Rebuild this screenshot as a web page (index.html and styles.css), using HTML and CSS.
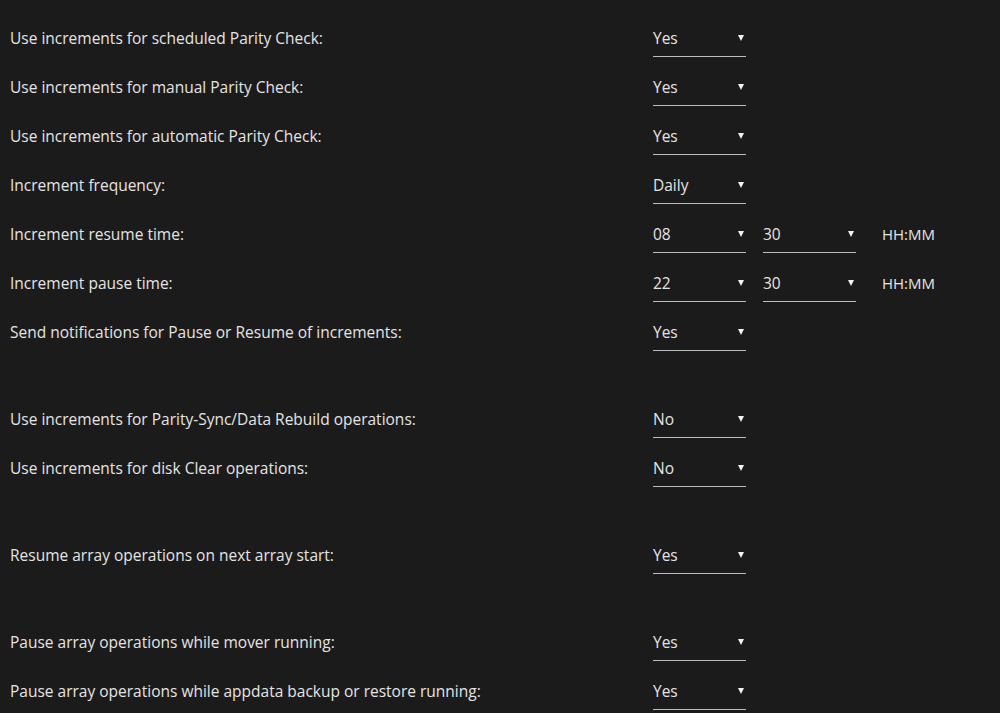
FILE: index.html
```html
<!DOCTYPE html>
<html>
<head>
<meta charset="utf-8">
<link rel="stylesheet" href="styles.css">
</head>
<body>
<div class="form">
  <div class="row"><div class="label">Use increments for scheduled Parity Check:</div><div class="sel"><span>Yes</span><i class="arrow"></i></div></div>
  <div class="row"><div class="label">Use increments for manual Parity Check:</div><div class="sel"><span>Yes</span><i class="arrow"></i></div></div>
  <div class="row"><div class="label">Use increments for automatic Parity Check:</div><div class="sel"><span>Yes</span><i class="arrow"></i></div></div>
  <div class="row"><div class="label">Increment frequency:</div><div class="sel"><span>Daily</span><i class="arrow"></i></div></div>
  <div class="row"><div class="label">Increment resume time:</div><div class="sel"><span>08</span><i class="arrow"></i></div><div class="sel sel2"><span>30</span><i class="arrow"></i></div><div class="unit">HH:MM</div></div>
  <div class="row"><div class="label">Increment pause time:</div><div class="sel"><span>22</span><i class="arrow"></i></div><div class="sel sel2"><span>30</span><i class="arrow"></i></div><div class="unit">HH:MM</div></div>
  <div class="row"><div class="label">Send notifications for Pause or Resume of increments:</div><div class="sel"><span>Yes</span><i class="arrow"></i></div></div>
  <div class="spacer"></div>
  <div class="row"><div class="label">Use increments for Parity-Sync/Data Rebuild operations:</div><div class="sel"><span>No</span><i class="arrow"></i></div></div>
  <div class="row"><div class="label">Use increments for disk Clear operations:</div><div class="sel"><span>No</span><i class="arrow"></i></div></div>
  <div class="spacer"></div>
  <div class="row"><div class="label">Resume array operations on next array start:</div><div class="sel"><span>Yes</span><i class="arrow"></i></div></div>
  <div class="spacer"></div>
  <div class="row"><div class="label">Pause array operations while mover running:</div><div class="sel"><span>Yes</span><i class="arrow"></i></div></div>
  <div class="row"><div class="label">Pause array operations while appdata backup or restore running:</div><div class="sel"><span>Yes</span><i class="arrow"></i></div></div>
</div>
</body>
</html>
```
FILE: styles.css
```css
html, body {
  margin: 0;
  padding: 0;
  background: #1c1b1b;
  height: 100%;
  overflow: hidden;
}
body {
  font-family: "Open Sans", "DejaVu Sans", sans-serif;
  font-size: 15.5px;
  font-weight: 500;
  color: #e4e4e4;
}
.form {
  padding: 14px 0 0 10px;
  display: flex;
  flex-direction: column;
}
.row {
  display: flex;
  align-items: flex-start;
  height: 49px;
}
.label {
  width: 643px;
  padding-top: 14px;
  line-height: 20px;
}
.sel {
  margin-top: 12px;
  width: 93px;
  box-sizing: border-box;
  padding: 2px 0 8px 0;
  line-height: 20px;
  border-bottom: 1px solid #bdbdbd;
  display: flex;
  align-items: center;
  justify-content: space-between;
}
.sel2 {
  margin-left: 17px;
}
.arrow {
  display: block;
  width: 0;
  height: 0;
  border-left: 3.5px solid transparent;
  border-right: 3.5px solid transparent;
  border-top: 6px solid #f2f2f2;
  margin-right: 2px;
}
.unit {
  margin-left: 26px;
  padding-top: 14px;
  line-height: 20px;
  font-size: 15px;
}
.spacer {
  height: 38px;
}
```
